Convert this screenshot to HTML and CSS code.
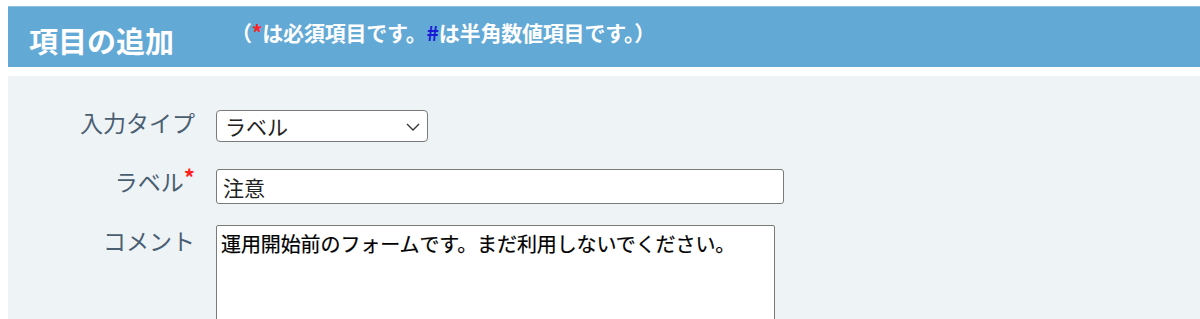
FILE: index.html
```html
<!DOCTYPE html>
<html lang="ja">
<head>
<meta charset="utf-8">
<link rel="stylesheet" href="styles.css">
</head>
<body>
<div class="page">
  <div class="header">
    <h1 class="title">項目の追加</h1>
    <p class="note">（<span class="req">*</span>は必須項目です。<span class="num">#</span>は半角数値項目です。）</p>
  </div>
  <div class="panel">
    <div class="row row-type">
      <label class="lbl">入力タイプ</label>
      <div class="select-wrap">
        <select class="select"><option>ラベル</option></select>
        <svg class="chev" width="14" height="8" viewBox="0 0 14 8"><path d="M1 1 L7 7 L13 1" fill="none" stroke="#333" stroke-width="1.3"/></svg>
      </div>
    </div>
    <div class="row row-label">
      <label class="lbl">ラベル<span class="star">*</span></label>
      <input class="text" type="text" value="注意">
    </div>
    <div class="row row-comment">
      <label class="lbl">コメント</label>
      <textarea class="area">運用開始前のフォームです。まだ利用しないでください。</textarea>
    </div>
  </div>
</div>
</body>
</html>
```

FILE: styles.css
```css
html, body {
  margin: 0;
  padding: 0;
  background: #ffffff;
  overflow: hidden;
}
body {
  font-family: "Noto Sans CJK JP", "Noto Sans", sans-serif;
}
.page {
  padding: 6px 0 0 8px;
  height: 313px;
  overflow: hidden;
}
.header {
  height: 60px;
  background: #62a9d6;
  border-top: 1px solid #8fc4e7;
  display: flex;
  align-items: flex-start;
  color: #ffffff;
}
.title {
  margin: 13px 0 0 21px;
  font-size: 29px;
  font-weight: 700;
  line-height: 40px;
  letter-spacing: 0;
}
.note {
  margin: 10px 0 0 57px;
  font-size: 21px;
  font-weight: 700;
  line-height: 30px;
  letter-spacing: -0.2px;
}
.req { color: #ff2222; }
.num { color: #1a1ad6; }
.panel {
  margin-top: 9px;
  background: #eef3f6;
  height: 243px;
  padding-top: 34px;
  box-sizing: border-box;
  overflow: hidden;
}
.row {
  display: grid;
  grid-template-columns: 187px auto;
  column-gap: 21px;
  align-items: start;
}
.lbl {
  text-align: right;
  color: #4a5e72;
  font-size: 23px;
  line-height: 30px;
}
.row-type .lbl { margin-top: -3px; }
.row-label { margin-top: 27px; }
.row-label .lbl { margin-top: -3px; }
.row-comment { margin-top: 21px; }
.row-comment .lbl { margin-top: 0; }
.star {
  color: #ff2020;
  font-size: 22px;
  font-weight: 700;
  vertical-align: top;
  line-height: 20px;
}
.select-wrap {
  position: relative;
  width: 212px;
  height: 32px;
}
.select {
  appearance: none;
  -webkit-appearance: none;
  width: 212px;
  height: 32px;
  box-sizing: border-box;
  border: 1px solid #7a7a7a;
  border-radius: 4px;
  background: #ffffff;
  font-family: "Noto Sans CJK JP", sans-serif;
  font-size: 21px;
  color: #222;
  padding: 0 0 0 8px;
  margin: 0;
}
.chev {
  position: absolute;
  right: 8px;
  top: 13px;
}
.text {
  width: 568px;
  height: 35px;
  box-sizing: border-box;
  border: 1px solid #7a7a7a;
  border-radius: 3px;
  background: #fff;
  font-family: "Noto Sans CJK JP", sans-serif;
  font-size: 21px;
  color: #222;
  padding: 0 6px;
  margin: 0;
}
.area {
  width: 559px;
  height: 110px;
  box-sizing: border-box;
  border: 1px solid #7a7a7a;
  border-radius: 2px;
  background: #fff;
  font-family: "Noto Sans CJK JP", sans-serif;
  font-size: 20px;
  line-height: 28px;
  color: #000;
  padding: 4px 4px;
  margin: 0;
  resize: none;
  letter-spacing: -0.1px;
  -webkit-text-stroke: 0.2px #000;
}
```
